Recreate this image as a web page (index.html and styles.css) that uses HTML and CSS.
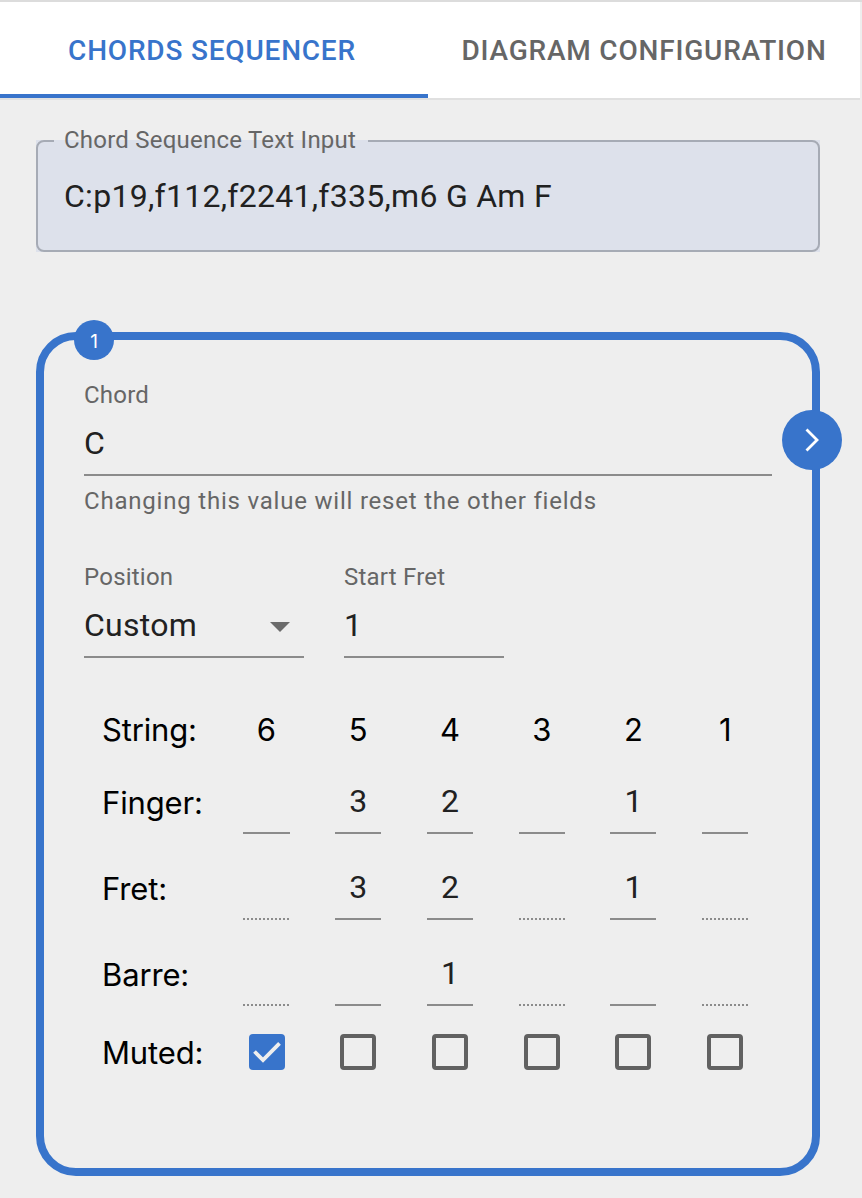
FILE: index.html
```html
<!DOCTYPE html>
<html lang="en">
<head>
<meta charset="utf-8">
<title>Chords Sequencer</title>
<link rel="stylesheet" href="styles.css">
</head>
<body>
<nav class="tabs">
  <div class="tab tab-active">CHORDS SEQUENCER</div>
  <div class="tab">DIAGRAM CONFIGURATION</div>
</nav>
<main class="page">
  <div class="sequence-bg">
    <fieldset class="sequence">
      <legend class="label">Chord Sequence Text Input</legend>
      <div class="sequence-value">C:p19,f112,f2241,f335,m6 G Am F</div>
    </fieldset>
  </div>

  <section class="card">
    <span class="badge">1</span>
    <span class="next">
      <svg width="60" height="60" viewBox="0 0 60 60"><path d="M24.5 19.5L35 30L24.5 40.5" fill="none" stroke="#fff" stroke-width="2.8"/></svg>
    </span>

    <div class="field">
      <div class="label">Chord</div>
      <div class="value">C</div>
      <div class="helper">Changing this value will reset the other fields</div>
    </div>

    <div class="row">
      <div class="field position">
        <div class="label">Position</div>
        <div class="value">Custom
          <svg class="caret" width="20" height="10" viewBox="0 0 20 10"><path d="M0 0H20L10 10Z" fill="#6b6b6b"/></svg>
        </div>
      </div>
      <div class="field start-fret">
        <div class="label">Start Fret</div>
        <div class="value">1</div>
      </div>
    </div>

    <div class="grid">
      <div class="head head-string">String:</div>
      <div class="num">6</div><div class="num">5</div><div class="num">4</div><div class="num">3</div><div class="num">2</div><div class="num">1</div>

      <div class="head">Finger:</div>
      <div class="cell first"></div><div class="cell">3</div><div class="cell">2</div><div class="cell"></div><div class="cell">1</div><div class="cell"></div>

      <div class="head">Fret:</div>
      <div class="cell first disabled"></div><div class="cell">3</div><div class="cell">2</div><div class="cell disabled"></div><div class="cell">1</div><div class="cell disabled"></div>

      <div class="head">Barre:</div>
      <div class="cell first disabled"></div><div class="cell"></div><div class="cell">1</div><div class="cell disabled"></div><div class="cell"></div><div class="cell disabled"></div>

      <div class="head">Muted:</div>
      <div class="check checked"><svg width="36" height="36" viewBox="0 0 36 36"><path d="M5.5 17.5L14 26L30.5 9.3" fill="none" stroke="#eee" stroke-width="3.8"/></svg></div>
      <div class="check"></div><div class="check"></div><div class="check"></div><div class="check"></div><div class="check"></div>
    </div>
  </section>
</main>
</body>
</html>
```

FILE: styles.css
```css
* { box-sizing: border-box; }

body {
  margin: 0;
  background: #eee;
  color: #212121;
  font-family: Roboto, "Liberation Sans", sans-serif;
  font-size: 32px;
}

svg { display: block; }

.tabs {
  display: flex;
  width: 860px;
  height: 100px;
  background: #fff;
  border-bottom: 2px solid #e0e0e0;
  position: relative;
}

.tabs::before {
  content: "";
  position: absolute;
  top: 0;
  left: 0;
  width: 862px;
  height: 2px;
  background: #dcdcdc;
}

.tab {
  flex: 0 0 428px;
  padding-top: 2px;
  padding-right: 4px;
  display: flex;
  align-items: center;
  justify-content: center;
  white-space: nowrap;
  font-size: 28px;
  font-weight: 500;
  letter-spacing: 0.8px;
  color: #666;
}

.tab + .tab { padding: 2px 0 0; flex-basis: 432px; }

.tab-active {
  color: #3874cb;
  border-bottom: 4px solid #3874cb;
  padding-top: 6px;
}

.page { padding: 40px 42px 0 36px; }

.sequence-bg {
  height: 112px;
  background: #dde1eb;
}

.sequence {
  height: 126px;
  margin: 0;
  padding: 0 16px;
  border: 2px solid #a6abb5;
  border-radius: 8px;
  transform: translateY(-14px);
}

.label {
  font-size: 24px;
  line-height: 28px;
  letter-spacing: 0.225px;
  color: #666;
}

.sequence .label { padding: 0 12px 2px 10px; }

.sequence-value {
  padding: 12px 10px 0;
  line-height: 56px;
  letter-spacing: 0.28px;
}

.card {
  position: relative;
  height: 844px;
  margin-top: 80px;
  padding: 41px 40px 0;
  border: 8px solid #3874cb;
  border-radius: 40px;
}

.badge, .next {
  position: absolute;
  border-radius: 50%;
  background: #3874cb;
  color: #fff;
}

.badge {
  top: -20px;
  left: 30px;
  width: 40px;
  height: 40px;
  font: 19px/43px Inter, sans-serif;
  text-align: center;
}

.next { top: 70px; right: -30px; }

.value {
  display: flex;
  align-items: center;
  justify-content: space-between;
  height: 67px;
  padding-top: 2px;
  border-bottom: 2px solid #8b8b8b;
  letter-spacing: 0.28px;
}

.helper {
  margin-top: 11px;
  font-size: 24px;
  line-height: 28px;
  letter-spacing: 0.79px;
  color: #666;
}

.row {
  display: flex;
  gap: 40px;
  margin-top: 48px;
}

.position { width: 220px; }
.start-fret { width: 160px; }
.caret { margin: 5px 14px 0 0; }

.grid {
  display: grid;
  grid-template-columns: 118.6px repeat(6, 91.75px);
  grid-template-rows: 56px 86px 86px 86px 70px;
  width: 688px;
  margin-top: 45px;
  padding-left: 18px;
}

.head, .num {
  font-family: Inter, sans-serif;
  font-size: 31px;
  line-height: 54px;
  color: #000;
}

.head {
  align-self: center;
  padding-top: 2px;
  letter-spacing: -0.15px;
}

.head-string {
  align-self: start;
  padding-top: 0;
}

.num { text-align: center; }

.cell {
  justify-self: center;
  align-self: start;
  width: 46px;
  height: 75px;
  padding-top: 14px;
  border-bottom: 2px solid #8b8b8b;
  line-height: 56px;
  text-align: center;
}

.first {
  width: 47px;
  margin-left: 1px;
}

.disabled {
  border-bottom: 0;
  background: repeating-linear-gradient(to right, #8b8b8b 0 2px, transparent 2px 4px) left bottom / 100% 2px no-repeat;
}

.check {
  place-self: center;
  width: 36px;
  height: 36px;
  border: 4px solid #616161;
  border-radius: 4px;
}

.checked {
  border: 0;
  margin-left: 1px;
  background: #3874cb;
}
```
